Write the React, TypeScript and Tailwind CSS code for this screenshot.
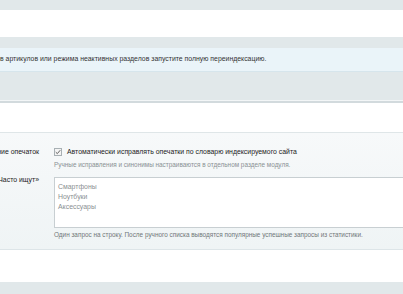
import React from 'react';

// ----------------------------------------------------------------------

const Label: React.FC<{ text: string }> = ({ text }) => (
  <div className="flex h-[10px] items-center justify-end">
    <span className="whitespace-nowrap">{text}</span>
  </div>
);

const App: React.FC = () => {
  return (
    <div className="min-h-[294px] overflow-hidden bg-[#e1e8ea] pt-[10px] font-['Liberation_Sans',Arial,sans-serif]">
      <div className="h-[27px] bg-white" />

      <div className="mt-[11px] flex h-[24px] items-center border-b border-[#d6e5ec] bg-[#eaf4f9] text-[6.9px] text-[#333]">
        <div className="flex w-0 justify-end">
          <span className="whitespace-nowrap">После изменения шаблоно</span>
        </div>
        <span className="whitespace-nowrap">в артикулов или режима неактивных разделов запустите полную переиндексацию.</span>
      </div>

      <div className="mt-[28px] border-t border-[#f3f6f7]">
        <div className="border-t-2 border-[#d2dadd] bg-white">
          <div className="h-[30px] border-b border-[#dfe6e8]" />

          <div className="grid h-[116px] grid-cols-[39px_1fr] content-start gap-x-[15px] bg-gradient-to-b from-[#f7f9fa] to-[#eff4f5] pt-[14px] text-[6.9px] leading-[10px] text-[#222]">
            <Label text="Исправление опечаток" />
            <div className="flex flex-col">
              <label className="flex h-[10px] items-center gap-[5px]">
                <span className="flex h-[8px] w-[8px] items-center justify-center border border-[#a8b0b4] bg-[#f4f4f4]">
                  <svg viewBox="0 0 8 8" className="h-[6px] w-[6px]">
                    <path d="M1 4.2 L3.1 6.2 L7 1.6" fill="none" stroke="#555" strokeWidth="1.2" />
                  </svg>
                </span>
                <span className="whitespace-nowrap">Автоматически исправлять опечатки по словарю индексируемого сайта</span>
              </label>
              <p className="mt-[3px] whitespace-nowrap text-[6.4px] text-[#8a9194]">
                Ручные исправления и синонимы настраиваются в отдельном разделе модуля.
              </p>
            </div>

            <div className="mt-[5px]">
              <Label text="Блок «Часто ищут»" />
            </div>
            <div className="mt-[7px] flex flex-col">
              <div className="h-[51px] w-[400px] border border-[#c8cfd2] bg-white px-[3px] pt-[4px] text-[#8a8f92]">
                <p>Смартфоны</p>
                <p>Ноутбуки</p>
                <p>Аксессуары</p>
              </div>
              <p className="mt-[2px] whitespace-nowrap text-[6.4px] text-[#707779]">
                Один запрос на строку. После ручного списка выводятся популярные успешные запросы из статистики.
              </p>
            </div>
          </div>

          <div className="h-[33px] border-t border-[#dde5e8] bg-white" />
        </div>
      </div>
    </div>
  );
};

export default App;
